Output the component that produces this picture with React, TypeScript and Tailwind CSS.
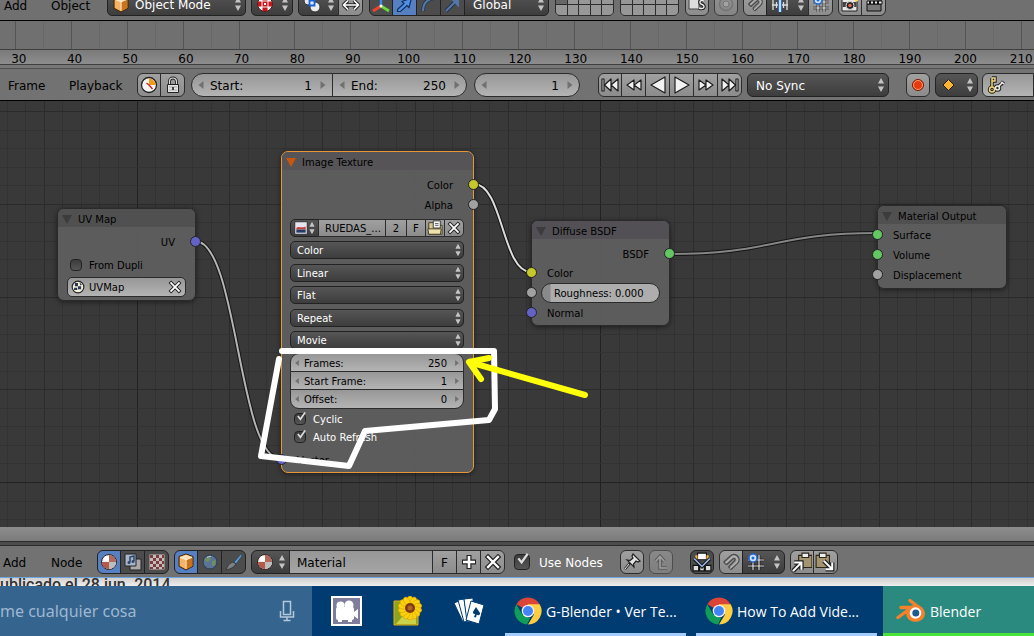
import type { ReactNode } from "react";
import { clsx } from "clsx";

const menu = "border border-[#222] bg-linear-to-b from-[#565656] to-[#3d3d3d] text-white";
const tool = "border border-[#2c2c2c] bg-linear-to-b from-[#a0a0a0] to-[#8c8c8c] text-black";
const dark = "border border-[#222] bg-[#4c4c4c] text-white";
const active = "border border-[#222] bg-[#5680c2] text-white";
const numeric = "border border-[#2c2c2c] bg-linear-to-b from-[#979797] to-[#b4b4b4] text-black";

function Icon({ children, className }: { children: ReactNode; className?: string }) {
  return (
    <svg viewBox="0 0 18 18" className={clsx("shrink-0", className ?? "size-[18px]")} fill="none" aria-hidden>
      {children}
    </svg>
  );
}

function Updown({ className }: { className?: string }) {
  return (
    <svg viewBox="0 0 6 14" className={clsx("h-3.5 w-1.5 shrink-0", className)} fill="#c4c4c4" aria-hidden>
      <path d="M3 0 6 5.6H0zM3 14 0 8.4h6z" />
    </svg>
  );
}

function CubeIcon() {
  return (
    <Icon>
      <path d="M9 1 16 3.5v9.8L9 17 2 13.3V3.5z" fill="#e8912d" stroke="#3a2510" />
      <path d="m9 1.8 6 2.2-6 2.5-6-2.5z" fill="#ffe3b8" />
      <path d="m3 4.5 5.6 2.4v8.8L3 12.7z" fill="#f6b366" />
      <path d="m15 4.5-5.6 2.4v8.8l5.6-3z" fill="#c9741c" />
      <path d="m3 4.3 6 2.5 6-2.5M9 6.8v9" stroke="#fff2dc" />
    </Icon>
  );
}

function BuoyIcon() {
  return (
    <Icon>
      <circle cx="9" cy="9" r="7.5" fill="#f4f4f4" stroke="#4a1515" />
      <path d="M6.500 2h5v3.500h-5zM6.500 12.500h5V16h-5zM2 6.500h3.500v5H2zM12.500 6.500H16v5h-3.500z" fill="#c4161c" />
      <path d="M6.500 6.500h5v5h-5z" fill="#c4161c" />
      <path d="M8 8h2v2H8z" fill="#f4f4f4" />
    </Icon>
  );
}

function BallIcon() {
  return (
    <Icon>
      <circle cx="9" cy="9" r="7.500" fill="#ececec" stroke="#2a2020" />
      <path d="M9 1.800A7.200 7.200 0 0 1 16.200 9H9z" fill="#b06a5c" />
      <path d="M9 9v7.200A7.200 7.200 0 0 1 1.800 9z" fill="#b5594a" />
      <path d="M9 9h7.200A7.200 7.200 0 0 1 9 16.200z" fill="#bdbdbd" />
      <circle cx="6.500" cy="5.500" r="2.500" fill="#fff" />
    </Icon>
  );
}

function PivotIcon() {
  return (
    <Icon>
      <circle cx="5" cy="6" r="4" fill="#e6e6e6" stroke="#333" />
      <circle cx="12" cy="12" r="5" fill="#ececec" stroke="#333" />
      <path d="M6.500 5.500h5v5h-5z" fill="#dfeaff" stroke="#1763d6" strokeWidth="1.800" />
    </Icon>
  );
}

function MagnetIcon({ className }: { className?: string }) {
  return (
    <Icon className={className}>
      <path d="m2.500 9 6-5.500a4.600 4.600 0 0 1 6.500 6.500l-6 5.800" stroke="#4b4b4b" strokeWidth="1.200" />
      <path d="m5 11.500 6-5.500c1-.8 2.300.5 1.500 1.500L6.800 13.400" stroke="#4b4b4b" strokeWidth="1.200" />
      <path d="m2.500 9 2.500 2.500M6.800 13.400 9 15.800" stroke="#4b4b4b" strokeWidth="1.200" />
      <path d="m4 10 5.800-5.300a3.200 3.200 0 0 1 4.300 4.600L8 15" stroke="#b9b9b9" />
    </Icon>
  );
}

function SnapGridIcon() {
  return (
    <Icon>
      <path d="M1 7h16M1 13h16M6 2v15M12 2v15" stroke="#111" strokeWidth="2.600" />
      <path d="M1 7h16M1 13h16M6 2v15M12 2v15" stroke="#e8e8e8" strokeWidth="1.200" />
      <circle cx="6" cy="5" r="4" fill="#cfe2ff" stroke="#2168d8" strokeWidth="1.500" />
      <circle cx="6" cy="5" r="1.500" fill="#2168d8" />
    </Icon>
  );
}

function IncrementIcon() {
  return (
    <Icon>
      <path d="M1 10h16M2 5v10M5.500 7v6M12.500 7v6M16 5v10" stroke="#ddd" strokeWidth="1.300" />
      <path d="M9 2v15" stroke="#2168d8" strokeWidth="4" />
      <path d="M9 2v15" stroke="#dceaff" strokeWidth="1.800" />
    </Icon>
  );
}

function CrossIcon({ className }: { className?: string }) {
  return (
    <Icon className={className}>
      <path d="m4 4 10 10M14 4 4 14" stroke="#222" strokeWidth="4.600" strokeLinecap="square" />
      <path d="m4 4 10 10M14 4 4 14" stroke="#fff" strokeWidth="2.300" strokeLinecap="square" />
    </Icon>
  );
}

function PasteIcon({ out }: { out?: boolean }) {
  return (
    <Icon className="size-5">
      <path d={out ? "M1 3h12v11H1z" : "M6 3h12v11H6z"} fill="#a3946f" stroke="#2c2719" />
      <path d={out ? "M4 1h6v4H4z" : "M9 1h6v4H9z"} fill="#eee" stroke="#2c2719" />
      <path d={out ? "m8 8 7 7M15.500 9.500v6h-6" : "m1 17 7-7M2 9.500h6.500V16"} stroke="#222" strokeWidth="4" />
      <path d={out ? "m8 8 7 7M15.500 9.500v6h-6" : "m1 17 7-7M2 9.500h6.500V16"} stroke="#fff" strokeWidth="1.800" />
    </Icon>
  );
}

const transport: { label: string; d: string }[] = [
  { label: "Jump to first frame", d: "M1 3h2v12H1zM10 3v12L3.500 9zM17 3v12l-7-6z" },
  { label: "Previous keyframe", d: "M9 4v10L2 9zM16 4v10L9 9z" },
  { label: "Play backwards", d: "M16 1v16L2 9z" },
  { label: "Play", d: "M2 1v16l14-8z" },
  { label: "Next keyframe", d: "M2 4v10l7-5zM9 4v10l7-5z" },
  { label: "Jump to last frame", d: "M1 3v12l7-6zM8 3v12l6.500-6zM15 3h2v12h-2z" },
];

type Edge = "start" | "end" | "both";

// buttons inside a strip overlap their left neighbour's border by one pixel
function ToolButton({ label, look = tool, edge, className, children }: { label: string; look?: string; edge?: Edge; className?: string; children?: ReactNode }) {
  return (
    <button
      type="button"
      aria-label={label}
      className={clsx(
        "flex h-6 shrink-0 items-center justify-center",
        edge === "start" || edge === "both" ? "w-6" : "-ml-px w-[25px]",
        edge === "start" && "rounded-l-[6px]",
        edge === "end" && "rounded-r-[6px]",
        edge === "both" && "rounded-[6px]",
        look,
        className,
      )}
    >
      {children}
    </button>
  );
}

function Menu({ label, value, icon, className, small }: { label: string; value: string; icon?: ReactNode; className?: string; small?: boolean }) {
  return (
    <label className={clsx("relative flex shrink-0 items-center", menu, small ? "h-[18px] rounded-[5px]" : "h-6", className)}>
      {icon && <span className="pointer-events-none absolute left-1">{icon}</span>}
      <select
        aria-label={label}
        className={clsx("h-full w-full appearance-none bg-transparent pt-0.5 outline-none", small ? "pl-1.5" : icon ? "pl-[27px]" : "pl-2")}
      >
        <option>{value}</option>
      </select>
      <Updown className={clsx("pointer-events-none absolute", small ? "right-0.5 scale-90" : "right-1")} />
    </label>
  );
}

function IconMenu({ label, icon, className }: { label: string; icon: ReactNode; className?: string }) {
  return (
    <button type="button" aria-label={label} className={clsx("flex h-6 shrink-0 items-center justify-between px-1", menu, className)}>
      {icon}
      <Updown />
    </button>
  );
}

function NumberField({ label, value, className, small }: { label?: string; value: string; className?: string; small?: boolean }) {
  const arrow = clsx("shrink-0", small ? "h-1.5 w-1" : "h-2 w-1.5");
  return (
    <label className={clsx("flex items-center", numeric, small ? "px-1" : "h-6 px-1.5", className)}>
      <svg viewBox="0 0 5 8" className={arrow} fill="#717171" aria-hidden>
        <path d="M5 0v8L0 4z" />
      </svg>
      <span className={clsx("shrink-0 pt-0.5", small ? "ml-[5px]" : "ml-1.5")}>{label}</span>
      <input aria-label={label ?? "Current frame"} defaultValue={value} className="mr-2 w-0 min-w-0 flex-1 bg-transparent pt-0.5 text-right outline-none" />
      <svg viewBox="0 0 5 8" className={arrow} fill="#717171" aria-hidden>
        <path d="M0 0v8l5-4z" />
      </svg>
    </label>
  );
}

function Check({ label, checked, large, className }: { label: string; checked?: boolean; large?: boolean; className?: string }) {
  return (
    <label className={clsx("relative flex items-center", className)}>
      <input
        type="checkbox"
        defaultChecked={checked}
        className={clsx("peer appearance-none rounded-[4px] border border-[#222] bg-linear-to-b from-[#3c3c3c] to-[#555]", large ? "size-4" : "size-3")}
      />
      <svg
        viewBox="0 0 12 12"
        className={clsx("pointer-events-none absolute top-0 left-0.5 hidden peer-checked:block", large ? "size-3.5" : "size-[11px]")}
        fill="none"
        aria-hidden
      >
        <path d="m2 5.500 2.800 3.500L10 1.500" stroke="#dedede" strokeWidth="1.900" />
      </svg>
      <span className={clsx("pt-0.5", large ? "ml-[9px]" : "ml-[7px]")}>{label}</span>
    </label>
  );
}

function LayerGrid({ used }: { used?: boolean }) {
  return (
    <div className="grid h-6 w-[59px] shrink-0 grid-cols-5 grid-rows-2 gap-px overflow-hidden rounded-[5px] border border-[#2c2c2c] bg-[#2c2c2c]">
      {Array.from({ length: 10 }, (_, i) => (
        <button key={i} type="button" aria-label={`Layer ${i + 1}`} className={used && i === 0 ? "bg-[#666]" : "bg-[#979797]"} />
      ))}
    </div>
  );
}

function ViewHeader() {
  return (
    <header className="flex h-[21px] shrink-0 items-end overflow-hidden border-b border-black bg-[#707070] pb-1 pl-1">
      <button type="button" className="h-6 w-[47px] shrink-0 pt-1 text-left">Add</button>
      <button type="button" className="h-6 w-14 shrink-0 pt-1 text-left">Object</button>
      <Menu label="Mode" value="Object Mode" icon={<CubeIcon />} className="w-[139px] rounded-[5px]" />
      <IconMenu label="Viewport shading" icon={<BuoyIcon />} className="ml-[5px] w-[42px] rounded-[5px]" />
      <IconMenu label="Pivot point" icon={<PivotIcon />} className="ml-[5px] w-[41px] rounded-l-[5px]" />
      <ToolButton label="Manipulate centers" edge="end">
        <Icon>
          <path d="M2 10h14M6 5.500 1.500 10 6 14.500M12 5.500l4.500 4.500-4.500 4.500" stroke="#222" strokeWidth="3.600" />
          <path d="M2 10h14M6 5.500 1.500 10 6 14.500M12 5.500l4.500 4.500-4.500 4.500" stroke="#fff" strokeWidth="1.600" />
        </Icon>
      </ToolButton>
      <ToolButton label="Manipulator" look={dark} edge="start" className="ml-1.5">
        <Icon>
          <path d="M9 11V1" stroke="#3b8cf0" strokeWidth="2.400" />
          <path d="m9 11-8 5" stroke="#f0442c" strokeWidth="2.800" />
          <path d="m9 11 8 5" stroke="#6cd83c" strokeWidth="2.800" />
          <circle cx="9" cy="11" r="1.500" fill="#fff" />
        </Icon>
      </ToolButton>
      <ToolButton label="Translate" look={active}>
        <Icon>
          <path d="m1.500 14.500 6.500-6-2-2L15.500 3 13 12.500l-2-2-6.500 6H1.500z" fill="#4f8fe8" stroke="#10305e" strokeWidth="1.200" />
        </Icon>
      </ToolButton>
      <ToolButton label="Rotate" look={dark}>
        <Icon>
          <path d="M3 16C3 9 7 4 15 3" stroke="#23344f" strokeWidth="3.600" />
          <path d="M3 16C3 9 7 4 15 3" stroke="#5577a8" strokeWidth="2" />
        </Icon>
      </ToolButton>
      <ToolButton label="Scale" look={dark}>
        <Icon>
          <path d="m2 16 9-9" stroke="#23344f" strokeWidth="4" />
          <path d="m2 16 9-9M8 4h6v6z" stroke="#5577a8" strokeWidth="2" fill="#5577a8" />
        </Icon>
      </ToolButton>
      <Menu label="Orientation" value="Global" className="-ml-px w-[85px] rounded-r-[5px]" />
      <div className="ml-1.5 flex gap-1.5">
        <LayerGrid used />
        <LayerGrid />
      </div>
      <ToolButton label="Lock camera and layers" edge="both" className="ml-1.5">
        <Icon>
          <path d="M1 1h10v13H1z" fill="#ddd" stroke="#444" />
          <path d="M16 6c-5-2-5 3-2 3.500s3 5.500-3 3.500" stroke="#222" strokeWidth="3.600" />
          <path d="M16 6c-5-2-5 3-2 3.500s3 5.500-3 3.500" stroke="#eee" strokeWidth="1.400" />
        </Icon>
      </ToolButton>
      <ToolButton label="Proportional editing" edge="both" className="ml-[5px] opacity-75">
        <Icon>
          <circle cx="9" cy="9" r="6.500" stroke="#777" strokeWidth="1.500" />
          <circle cx="9" cy="9" r="3" stroke="#777" fill="#b5b5b5" />
        </Icon>
      </ToolButton>
      <ToolButton label="Snap" edge="start" className="ml-[5px]">
        <MagnetIcon />
      </ToolButton>
      <IconMenu label="Snap element" icon={<IncrementIcon />} className="-ml-px w-[43px]" />
      <ToolButton label="Snap to grid" edge="end">
        <SnapGridIcon />
      </ToolButton>
      <ToolButton label="Render image" edge="start" className="ml-[5px]">
        <Icon>
          <path d="M1 4h15v12H1z" fill="#e8e8e8" stroke="#222" />
          <path d="M1.500 7h14v5h-14z" fill="#444" />
          <circle cx="9" cy="10.500" r="4" fill="#222" stroke="#ddd" />
          <circle cx="9" cy="10.500" r="1.800" fill="#e06a50" />
          <path d="m14 3 3-1v4l-3 1z" fill="#ffd84a" />
        </Icon>
      </ToolButton>
      <ToolButton label="Render animation" edge="end">
        <Icon>
          <path d="M2 9h14v7H2z" fill="#777" stroke="#111" />
          <path d="M2 6h15v3H2z" fill="#eee" stroke="#111" />
          <path d="m2 3 15 1.500" stroke="#111" strokeWidth="2.500" />
          <path d="M5 6v3M9 6v3M13 6v3" stroke="#111" strokeWidth="2" />
        </Icon>
      </ToolButton>
    </header>
  );
}

const rulerFrames = Array.from({ length: 19 }, (_, i) => 30 + i * 10);

function Ruler() {
  return (
    <section aria-label="Timeline" className="shrink-0 overflow-hidden bg-[#707070]">
      <div className="-mr-[43px] ml-[15px] flex h-7">
        {rulerFrames.map((frame) => (
          <div key={frame} className="flex min-w-0 flex-1 border-l border-[#555]">
            <span className="ml-[27px] border-l border-[#686868]" />
          </div>
        ))}
      </div>
      <div className="border-y border-[#3f3f3f] bg-linear-to-b from-[#7a7a7a] to-[#8d8d8d]">
        <div className="-mr-[15px] -ml-[9px] flex h-3.5 items-center leading-[14px]">
          {rulerFrames.map((frame) => (
            <span key={frame} className="mt-1 min-w-0 flex-1 text-center">{frame}</span>
          ))}
        </div>
      </div>
      <div className="h-1 border-b border-[#505050] bg-[#777]" />
    </section>
  );
}

function TimelineHeader() {
  return (
    <header className="flex h-8 shrink-0 items-center overflow-hidden border-b border-black bg-[#727272] pl-2">
      <button type="button" className="w-[61px] shrink-0 pt-0.5 text-left">Frame</button>
      <button type="button" className="w-[68px] shrink-0 pt-0.5 text-left">Playback</button>
      <ToolButton label="Use preview range" edge="start">
        <Icon>
          <circle cx="9" cy="9" r="7.500" fill="#f5f5f5" stroke="#222" strokeWidth="1.300" />
          <path d="M9 2.500A6.500 6.500 0 0 1 15.500 9H9z" fill="#f39a16" />
          <path d="m9 9 3.500 4M6.500 7 9 9" stroke="#c22" strokeWidth="1.400" />
        </Icon>
      </ToolButton>
      <ToolButton label="Lock time cursor" edge="end">
        <Icon>
          <path d="M5.500 9V5.500a3.500 3.500 0 0 1 7 0V9" stroke="#222" strokeWidth="3" />
          <path d="M5.500 9V5.500a3.500 3.500 0 0 1 7 0V9" stroke="#ddd" strokeWidth="1.200" />
          <path d="M3.500 8.500h11v8h-11z" fill="#e2e2e2" stroke="#222" />
          <path d="M5 11h8M5 14h8" stroke="#aaa" />
          <path d="M9 11v3" stroke="#222" strokeWidth="1.600" />
        </Icon>
      </ToolButton>
      <NumberField label="Start:" value="1" className="ml-1.5 w-[142px] shrink-0 rounded-l-full" />
      <NumberField label="End:" value="250" className="-ml-px w-[135px] shrink-0 rounded-r-full" />
      <NumberField value="1" className="ml-[7px] w-[106px] shrink-0 rounded-full" />
      <div className="ml-[18px] flex">
        {transport.map(({ label, d }, i) => (
          <ToolButton key={label} label={label} edge={i === 0 ? "start" : i === 5 ? "end" : undefined}>
            <Icon>
              <path d={d} fill="#f2f2f2" stroke="#1c1c1c" strokeWidth="1.200" strokeLinejoin="round" />
            </Icon>
          </ToolButton>
        ))}
      </div>
      <Menu label="Sync mode" value="No Sync" className="ml-[5px] w-[142px] rounded-[6px]" />
      <ToolButton label="Auto keyframe" edge="both" className="ml-[17px]">
        <Icon>
          <circle cx="9" cy="9" r="5.500" fill="#e8380d" stroke="#7c1500" />
          <circle cx="9" cy="9" r="4.500" stroke="#ff9a72" />
        </Icon>
      </ToolButton>
      <IconMenu
        label="Keyframe type"
        className="ml-[5px] w-[43px] rounded-[6px]"
        icon={
          <Icon>
            <path d="m8.500 3.500 5.500 5.500-5.500 5.500L3 9z" fill="#ffb62e" stroke="#2b1b00" />
          </Icon>
        }
      />
      <label className={clsx("ml-1 flex h-6 flex-1 items-center rounded-l-[6px] pl-1", numeric)}>
        <Icon>
          <path d="M5 2v9M5 2h3v3H5M11 11l5-5M14 6l3 2" stroke="#222" strokeWidth="3.500" />
          <circle cx="5" cy="13.500" r="2.500" stroke="#222" strokeWidth="3.500" />
          <circle cx="10.500" cy="12" r="2" stroke="#222" strokeWidth="3.500" />
          <path d="M11 11l5-5M14 6l3 2" stroke="#eee" strokeWidth="1.500" />
          <circle cx="10.500" cy="12" r="2" stroke="#eee" strokeWidth="1.500" />
          <path d="M5 2v9M5 2h3v3H5" stroke="#f0d674" strokeWidth="1.500" />
          <circle cx="5" cy="13.500" r="2.500" stroke="#f0d674" strokeWidth="1.500" />
        </Icon>
        <input aria-label="Active keying set" className="w-0 min-w-0 flex-1 bg-transparent outline-none" />
      </label>
    </header>
  );
}

function lineColor(i: number, axis: number) {
  if (i % 25 === axis) return "#222";
  return i % 5 === 0 ? "#2b2b2b" : "#323232";
}

function GridAndLinks() {
  const columns = Array.from({ length: 120 }, (_, i) => ({ x: Math.round(-49 + i * 18.55), color: lineColor(i, 10) }));
  const rows = Array.from({ length: 60 }, (_, i) => ({ y: Math.round(10 + i * 18.55), color: lineColor(i, 20) }));
  const links = [
    { d: "M195 140C238 140 238 358 281 358", color: "#b4b4b4" },
    { d: "M474 83C503 83 502 171 531 171", color: "#dcdcdc" },
    { d: "M669 153C774 153 774 132 878 132", color: "#858585" },
  ];
  return (
    <svg className="absolute inset-0 size-full" fill="none" aria-hidden>
      {columns.map(({ x, color }) => (
        <path key={x} d={`M${x + 0.5} 0v1200`} stroke={color} />
      ))}
      {rows.map(({ y, color }) => (
        <path key={y} d={`M0 ${y + 0.5}h2400`} stroke={color} />
      ))}
      {links.map(({ d, color }) => (
        <g key={d}>
          <path d={d} stroke="#151515" strokeWidth="4" />
          <path d={d} stroke={color} strokeWidth="2" />
        </g>
      ))}
    </svg>
  );
}

type Socket = "yellow" | "gray" | "green" | "blue";

const socketColors: Record<Socket, string> = {
  yellow: "bg-[#c7c729]",
  gray: "bg-[#a1a1a1]",
  green: "bg-[#63c763]",
  blue: "bg-[#6363c7]",
};

function NodeRow({ label, socket, side = "left", className, children }: { label?: string; socket: Socket; side?: "left" | "right"; className?: string; children?: ReactNode }) {
  return (
    <div className={clsx("relative flex h-5 items-center", side === "right" && "justify-end", className)}>
      <span
        className={clsx(
          "absolute top-1 size-[11px] rounded-full border border-[#222]",
          side === "right" ? "-right-1.5" : "-left-1.5",
          socketColors[socket],
        )}
      />
      {label && <span className={clsx("pt-0.5", side === "right" ? "pr-5" : "pl-[15px]")}>{label}</span>}
      {children}
    </div>
  );
}

function Node({ title, selected, className, headerClass, children }: { title: string; selected?: boolean; className: string; headerClass?: string; children: ReactNode }) {
  return (
    <section
      aria-label={title}
      className={clsx(
        "absolute rounded-[7px] border bg-[#616161]/90 text-[10px] leading-[14px] text-black shadow-[0_1px_5px_rgba(0,0,0,0.5)]",
        selected ? "border-[#e8963a]" : "border-[#2a2a2a]",
        className,
      )}
    >
      <h2 className={clsx("flex h-[18px] items-center rounded-t-[6px] pt-0.5", headerClass ?? "bg-[#505050]")}>
        <svg viewBox="0 0 10 9" className="mr-1.5 ml-1 h-[9px] w-2.5" fill={selected ? "#c8560f" : "#3c3c3c"} aria-hidden>
          <path d="M0 0h10L5 9z" />
        </svg>
        <span className="pt-0.5">{title}</span>
      </h2>
      {children}
    </section>
  );
}

function UvMapNode() {
  return (
    <Node title="UV Map" className="top-[107px] left-[57px] w-[139px] pb-[3px]">
      <NodeRow label="UV" socket="blue" side="right" className="mt-[5px]" />
      <Check label="From Dupli" className="mt-[5px] ml-3" />
      <label className={clsx("mx-[9px] mt-1 flex h-5 items-center rounded-[5px] px-[3px]", numeric)}>
        <Icon className="size-3.5">
          <circle cx="9" cy="9" r="7.500" fill="#f3f0dc" stroke="#222" strokeWidth="1.500" />
          <path d="M5 4h4v4H5zM9 8h4v4H9zM4 10h4v3H4zM11 3l3 3-2 1z" fill="#2b3550" />
        </Icon>
        <input aria-label="UV map" defaultValue="UVMap" className="ml-1 w-0 min-w-0 flex-1 bg-transparent pt-0.5 outline-none" />
        <button type="button" aria-label="Clear UV map">
          <CrossIcon className="size-3.5" />
        </button>
      </label>
    </Node>
  );
}

const textureMenus = [
  { label: "Color space", value: "Color" },
  { label: "Interpolation", value: "Linear" },
  { label: "Projection", value: "Flat" },
  { label: "Extension", value: "Repeat" },
  { label: "Source", value: "Movie" },
];

function ImageTextureNode() {
  return (
    <Node title="Image Texture" selected className="top-[50px] left-[281px] w-[193px] pb-0.5" headerClass="bg-[#565456]">
      <NodeRow label="Color" socket="yellow" side="right" className="mt-[5px]" />
      <NodeRow label="Alpha" socket="gray" side="right" />
      <div className="mr-[9px] ml-2 mt-1 flex h-[18px]">
        <button type="button" aria-label="Browse image" className={clsx("flex w-[29px] items-center justify-between rounded-l-[5px] px-[3px]", menu)}>
          <Icon className="size-3.5">
            <path d="M1 1h16v16H1z" fill="#e9e3ee" stroke="#222" />
            <path d="M3 9c3-3 5 1 12-2v4H3z" fill="#c0443a" />
            <path d="M3 11h12v4H3z" fill="#283a66" />
          </Icon>
          <Updown className="scale-90" />
        </button>
        <input aria-label="Image name" defaultValue="RUEDAS_..." className={clsx("-ml-px w-0 min-w-0 flex-1 pt-0.5 pl-1.5 outline-none", tool)} />
        <button type="button" aria-label="Users" className={clsx("-ml-px w-[22px] pt-px", tool)}>2</button>
        <button type="button" aria-label="Fake user" className={clsx("-ml-px w-5 pt-px", tool)}>F</button>
        <button type="button" aria-label="Open image" className={clsx("-ml-px flex w-5 items-center justify-center", tool)}>
          <Icon className="size-4">
            <path d="M2 3h5l1 3h9v10H2z" fill="#d7c98e" stroke="#3d3720" />
            <path d="M7 1h8v8H7z" fill="#f6f6f6" stroke="#333" />
            <path d="M9 4h4M9 6h4" stroke="#555" />
            <path d="M1 10h15l-1 6H2z" fill="#efe3ad" stroke="#3d3720" />
          </Icon>
        </button>
        <button type="button" aria-label="Unlink image" className={clsx("-ml-px flex w-5 items-center justify-center rounded-r-[5px]", tool)}>
          <CrossIcon className="size-3.5" />
        </button>
      </div>
      <div className="mr-[9px] ml-2 mt-1 flex h-[108px] flex-col justify-between">
        {textureMenus.map(({ label, value }) => (
          <Menu key={label} label={label} value={value} small />
        ))}
      </div>
      <div className="mr-[9px] ml-2 mt-1 flex flex-col">
        <NumberField label="Frames:" value="250" small className="h-[19px] rounded-t-[9px]" />
        <NumberField label="Start Frame:" value="1" small className="-mt-px h-[19px]" />
        <NumberField label="Offset:" value="0" small className="-mt-px h-5 rounded-b-[9px]" />
      </div>
      <div className="mt-0.5 ml-3 flex flex-col gap-0.5 text-white">
        <Check label="Cyclic" checked />
        <Check label="Auto Refresh" checked />
      </div>
      <NodeRow label="Vector" socket="blue" className="mt-[5px]" />
    </Node>
  );
}

function DiffuseNode() {
  return (
    <Node title="Diffuse BSDF" className="top-[119px] left-[531px] w-[139px] pb-0.5" headerClass="bg-[#535055]">
      <NodeRow label="BSDF" socket="green" side="right" className="mt-[5px]" />
      <NodeRow label="Color" socket="yellow" className="-mt-px" />
      <NodeRow socket="gray">
        <label className="mx-[9px] flex h-5 flex-1 items-center overflow-hidden rounded-full border border-[#2c2c2c] bg-linear-to-r from-[#8a8a8a] from-[8px] to-[#adadad] to-[9px] pt-0.5 pl-3">
          <span>Roughness:</span>
          <input aria-label="Roughness" defaultValue="0.000" className="ml-[3px] w-0 min-w-0 flex-1 bg-transparent outline-none" />
        </label>
      </NodeRow>
      <NodeRow label="Normal" socket="blue" />
    </Node>
  );
}

function OutputNode() {
  return (
    <Node title="Material Output" className="top-[104px] left-[877px] w-[130px] pb-[3px]">
      <div className="pt-px">
        <NodeRow label="Surface" socket="green" />
        <NodeRow label="Volume" socket="green" />
        <NodeRow label="Displacement" socket="gray" />
      </div>
    </Node>
  );
}

function NodeCanvas() {
  return (
    <main className="relative min-h-[426px] flex-1 overflow-hidden bg-[#393939]">
      <GridAndLinks />
      <UvMapNode />
      <ImageTextureNode />
      <DiffuseNode />
      <OutputNode />
      {/* freehand marks */}
      <svg className="pointer-events-none absolute inset-0 size-full" fill="none" strokeLinecap="round" strokeLinejoin="round" aria-hidden>
        <path d="M282 250H494L495 308 489 319 365 330 349 365 261 355 279 258" stroke="#fff" strokeWidth="6" />
        <path d="M585 294 469 261 489 257M469 261 481 278" stroke="#ffff0a" strokeWidth="6" />
      </svg>
    </main>
  );
}

function NodeHeader() {
  return (
    <>
      <div className="h-3.5 shrink-0 bg-linear-to-b from-[#8d8d8d] to-[#7b7b7b]" />
      <div className="h-[5px] shrink-0 border-y border-[#2b2b2b] bg-[#4b4b4b]" />
      <header className="flex h-8 shrink-0 items-center overflow-hidden border-b border-[#6fa6dd] bg-[#727272] pl-[3px]">
        <button type="button" className="w-12 shrink-0 pt-0.5 text-left">Add</button>
        <button type="button" className="w-[46px] shrink-0 pt-0.5 text-left">Node</button>
        <ToolButton label="Shader nodes" look={active} edge="start">
          <BallIcon />
        </ToolButton>
        <ToolButton label="Compositing nodes" look={dark}>
          <Icon>
            <path d="M6 6h11v11H6z" fill="#aaa" stroke="#222" />
            <path d="M1 1h11v12H1z" fill="#a9b6c8" stroke="#222" />
            <path d="M6 9V4l4-1v5" stroke="#28466e" strokeWidth="1.500" />
            <circle cx="5" cy="9.500" r="1.500" fill="#28466e" />
            <circle cx="9" cy="8.500" r="1.500" fill="#28466e" />
          </Icon>
        </ToolButton>
        <ToolButton label="Texture nodes" look={dark} edge="end">
          <Icon>
            <path d="M1.500 1.500h15v15h-15z" fill="#c4bcbc" />
            <path d="M2 2h3v3H2zM8 2h3v3H8zM14 2h2v3h-2zM5 5h3v3H5zM11 5h3v3h-3zM2 8h3v3H2zM8 8h3v3H8zM14 8h2v3h-2zM5 11h3v3H5zM11 11h3v3h-3zM2 14h3v2H2zM8 14h3v2H8zM14 14h2v2h-2z" fill="#7d3b3b" />
          </Icon>
        </ToolButton>
        <ToolButton label="Object shader" look={active} edge="start" className="ml-[5px]">
          <CubeIcon />
        </ToolButton>
        <ToolButton label="World shader" look={dark}>
          <Icon>
            <circle cx="9" cy="9" r="7" fill="#5b7394" stroke="#2c3a4c" />
            <path d="m4 5 4-1 2 2-3 3-3-1zM11 8l4-1-1 5-3 1z" fill="#6f8f62" />
            <path d="M6 4.500a5 5 0 0 1 4-1" stroke="#b8c9dd" />
          </Icon>
        </ToolButton>
        <ToolButton label="Line style shader" look={dark} edge="end">
          <Icon>
            <path d="m9 9 7-8 1 2-6 8z" fill="#5e97cc" stroke="#26405c" strokeWidth=".7" />
            <path d="M1 17c2-5 4-7 7-8l3 2c-2 3-5 5-10 6z" fill="#7b8186" stroke="#2b2b2b" strokeWidth=".7" />
          </Icon>
        </ToolButton>
        <IconMenu label="Browse material" icon={<BallIcon />} className="ml-[5px] w-[39px] rounded-l-[6px]" />
        <input
          aria-label="Material name"
          defaultValue="Material"
          className="-ml-px h-6 w-36 shrink-0 border border-[#2c2c2c] bg-linear-to-b from-[#979797] to-[#a5a5a5] pt-0.5 pl-[7px] text-black outline-none"
        />
        <ToolButton label="Fake user" className="pt-0.5">F</ToolButton>
        <ToolButton label="Add material">
          <Icon>
            <path d="M9 2v14M2 9h14" stroke="#222" strokeWidth="5" />
            <path d="M9 3v12M3 9h12" stroke="#fff" strokeWidth="2.600" />
          </Icon>
        </ToolButton>
        <ToolButton label="Unlink material" edge="end">
          <CrossIcon />
        </ToolButton>
        <Check label="Use Nodes" checked large className="ml-[9px] shrink-0 text-white" />
        <ToolButton label="Pin" edge="both" className="ml-[17px]">
          <Icon>
            <path d="m2 16 5-6" stroke="#222" strokeWidth="2.500" />
            <path d="m10 1 7 7-2 1-2-1-2.500 3 .5 3-7-7 3 .5L10 5 9 3z" fill="#e5e5e5" stroke="#222" strokeWidth="1.200" />
            <path d="m2 16 4-5" stroke="#eee" />
          </Icon>
        </ToolButton>
        <ToolButton label="Go to parent" edge="both" className="ml-[5px] opacity-50">
          <Icon>
            <path d="M15 15H8V5M3.500 8.500 8 3.500l4.500 5" stroke="#444" strokeWidth="3.600" />
            <path d="M15 15H8V5M3.500 8.500 8 3.500l4.500 5" stroke="#ccc" strokeWidth="1.600" />
          </Icon>
        </ToolButton>
        <ToolButton label="Auto-offset" look={dark} edge="both" className="ml-[17px]">
          <Icon className="size-5">
            <path d="M5 1h8v6H5z" fill="#fff" stroke="#111" />
            <path d="M3 3h2v4H3zM13 3h2v4h-2z" fill="#f0b44c" />
            <path d="M1 12h5v5H1zM12 12h5v5h-5zM7 13h4v4H7z" fill="#ddd" stroke="#111" />
            <path d="m2 6 7 7 7-7" stroke="#111" strokeWidth="3.200" />
            <path d="m2 6 7 7 7-7" stroke="#94b8e6" strokeWidth="1.400" />
          </Icon>
        </ToolButton>
        <ToolButton label="Snap nodes" edge="start" className="ml-[5px]">
          <MagnetIcon className="size-5" />
        </ToolButton>
        <IconMenu label="Snap node element" icon={<SnapGridIcon />} className="-ml-px w-[43px] rounded-r-[6px]" />
        <ToolButton label="Copy nodes" edge="start" className="ml-[5px]">
          <PasteIcon />
        </ToolButton>
        <ToolButton label="Paste nodes" edge="end">
          <PasteIcon out />
        </ToolButton>
      </header>
    </>
  );
}

function ChromeLogo() {
  return (
    <svg viewBox="0 0 28 28" className="size-7 shrink-0" aria-hidden>
      <path d="M14 14 2.300 7.200A13.500 13.500 0 0 1 25.700 7.200z" fill="#db4437" />
      <path d="M14 14V7.200h11.700A13.500 13.500 0 0 1 14 27.500l6-10z" fill="#ffcd40" />
      <path d="m2.300 7.200 6 10.200 5.700 3.200 2.200.2L13 27.500A13.500 13.500 0 0 1 2.300 7.200z" fill="#0f9d58" />
      <circle cx="14" cy="14" r="6.300" fill="#f1f1f1" />
      <circle cx="14" cy="14" r="5" fill="#4285f4" />
    </svg>
  );
}

function BlenderLogo() {
  return (
    <svg viewBox="0 0 30 26" className="h-[26px] w-[30px] shrink-0" fill="none" aria-hidden>
      <path d="M2 19.500 15 10M5 9.500h14M14 2.500l9 7" stroke="#f5812a" strokeWidth="3.400" strokeLinecap="round" />
      <ellipse cx="19.500" cy="15.500" rx="9.500" ry="8.500" fill="#f5812a" />
      <circle cx="19.500" cy="15" r="5.800" fill="#fff" />
      <circle cx="19.800" cy="15" r="3.500" fill="#1f5a91" />
    </svg>
  );
}

function Task({ title, logo, className }: { title: string; logo: ReactNode; className: string }) {
  return (
    <button type="button" className={clsx("flex items-center border-b-[3px] pt-[3px] text-left whitespace-nowrap", className)}>
      {logo}
      <span className="ml-1">{title}</span>
    </button>
  );
}

function Taskbar() {
  const petals = Array.from({ length: 14 }, (_, i) => (i * 360) / 14);
  return (
    <footer className="flex h-[50px] shrink-0 bg-[#003c71] font-['Open_Sans','Noto_Sans',sans-serif] text-[14px] text-white">
      <label className="flex w-[312px] shrink-0 items-center overflow-hidden bg-[#35648f] pr-[17px]">
        <input
          aria-label="Buscar"
          placeholder="me cualquier cosa"
          className="w-0 min-w-0 flex-1 bg-transparent font-['Noto_Sans',sans-serif] text-[16px] outline-none placeholder:text-[#9db8d0]"
        />
        <svg viewBox="0 0 16 22" className="h-[22px] w-4" fill="none" stroke="#b4c8da" strokeWidth="1.500" aria-hidden>
          <path d="M4.500 1.500h7v13h-7zM1.500 11v6h13v-6M8 17v3.500M4.500 20.500h7" />
        </svg>
      </label>
      <div className="flex shrink-0 items-center gap-[31px] pr-[21px] pl-[19px]">
        <button type="button" aria-label="Video">
          <svg viewBox="0 0 31 30" className="h-[30px] w-[31px]" aria-hidden>
            <path d="M1 1h29v28H1z" fill="#7f7c9c" stroke="#fff" strokeWidth="2" />
            <rect x="5" y="11" width="18" height="13" rx="2" fill="#fff" />
            <path d="m23 16 4-3v10l-4-3zM7 23h4v3H7zM17 23h4v3h-4z" fill="#fff" />
            <circle cx="9.500" cy="9.500" r="4" fill="#fff" />
            <circle cx="18" cy="9" r="4.500" fill="#fff" />
          </svg>
        </button>
        <button type="button" aria-label="Photos">
          <svg viewBox="0 0 30 30" className="size-[30px]" aria-hidden>
            <path d="M1 5h24v24H1z" fill="#8da51e" stroke="#e5ac19" />
            <path d="m3 28 7-8 6 4 7-6v10z" fill="#cbd24a" />
            {petals.map((angle) => (
              <ellipse key={angle} cx="17" cy="4.500" rx="2.800" ry="4.500" fill="#fad10c" stroke="#d99b06" strokeWidth=".5" transform={`rotate(${angle} 17 12)`} />
            ))}
            <circle cx="17" cy="12" r="5" fill="#7c3b12" />
            <circle cx="17" cy="12" r="2.500" fill="#b4642a" />
          </svg>
        </button>
        <button type="button" aria-label="Solitaire">
          <svg viewBox="0 0 30 28" className="h-7 w-[30px]" fill="#fff" stroke="#003c71" strokeLinejoin="round" aria-hidden>
            <path d="m0 6 5-2 7 19-3 2z" />
            <path d="m4 3 6-1 4 22-4 1z" />
            <path d="m10 2 9-1v23l-6 1z" />
            <path d="m17 4 13 4-5 19-13-4z" />
            <path d="m22 10 4 6c.5 2-2 3-3.200 1.500l-.8 3-2-.5 1.200-3c-2 .5-3-2-1.700-3z" fill="#003c71" stroke="none" />
          </svg>
        </button>
      </div>
      <Task title="G-Blender • Ver Te..." logo={<ChromeLogo />} className="mr-2.5 w-[181px] shrink-0 border-[#a3cdff] pl-[9px]" />
      <Task title="How To Add Vide..." logo={<ChromeLogo />} className="mr-1.5 w-[181px] shrink-0 border-[#a3cdff] pl-[9px]" />
      <Task title="Blender" logo={<BlenderLogo />} className="min-w-0 flex-1 border-[#4be33b] bg-[#2b8a80] pl-[13px]" />
    </footer>
  );
}

export default function App() {
  return (
    <div className="flex min-h-screen flex-col overflow-hidden bg-[#707070] font-['DejaVu_Sans',sans-serif] text-[12px] text-black">
      <ViewHeader />
      <Ruler />
      <TimelineHeader />
      <NodeCanvas />
      <NodeHeader />
      <p className="h-2 shrink-0 overflow-hidden bg-linear-to-b from-[#d2d0d0] to-[#eee] font-[Roboto,sans-serif] text-[16px] leading-[14px] font-medium text-[#333]">
        ublicado el 28 jun. 2014
      </p>
      <Taskbar />
    </div>
  );
}
